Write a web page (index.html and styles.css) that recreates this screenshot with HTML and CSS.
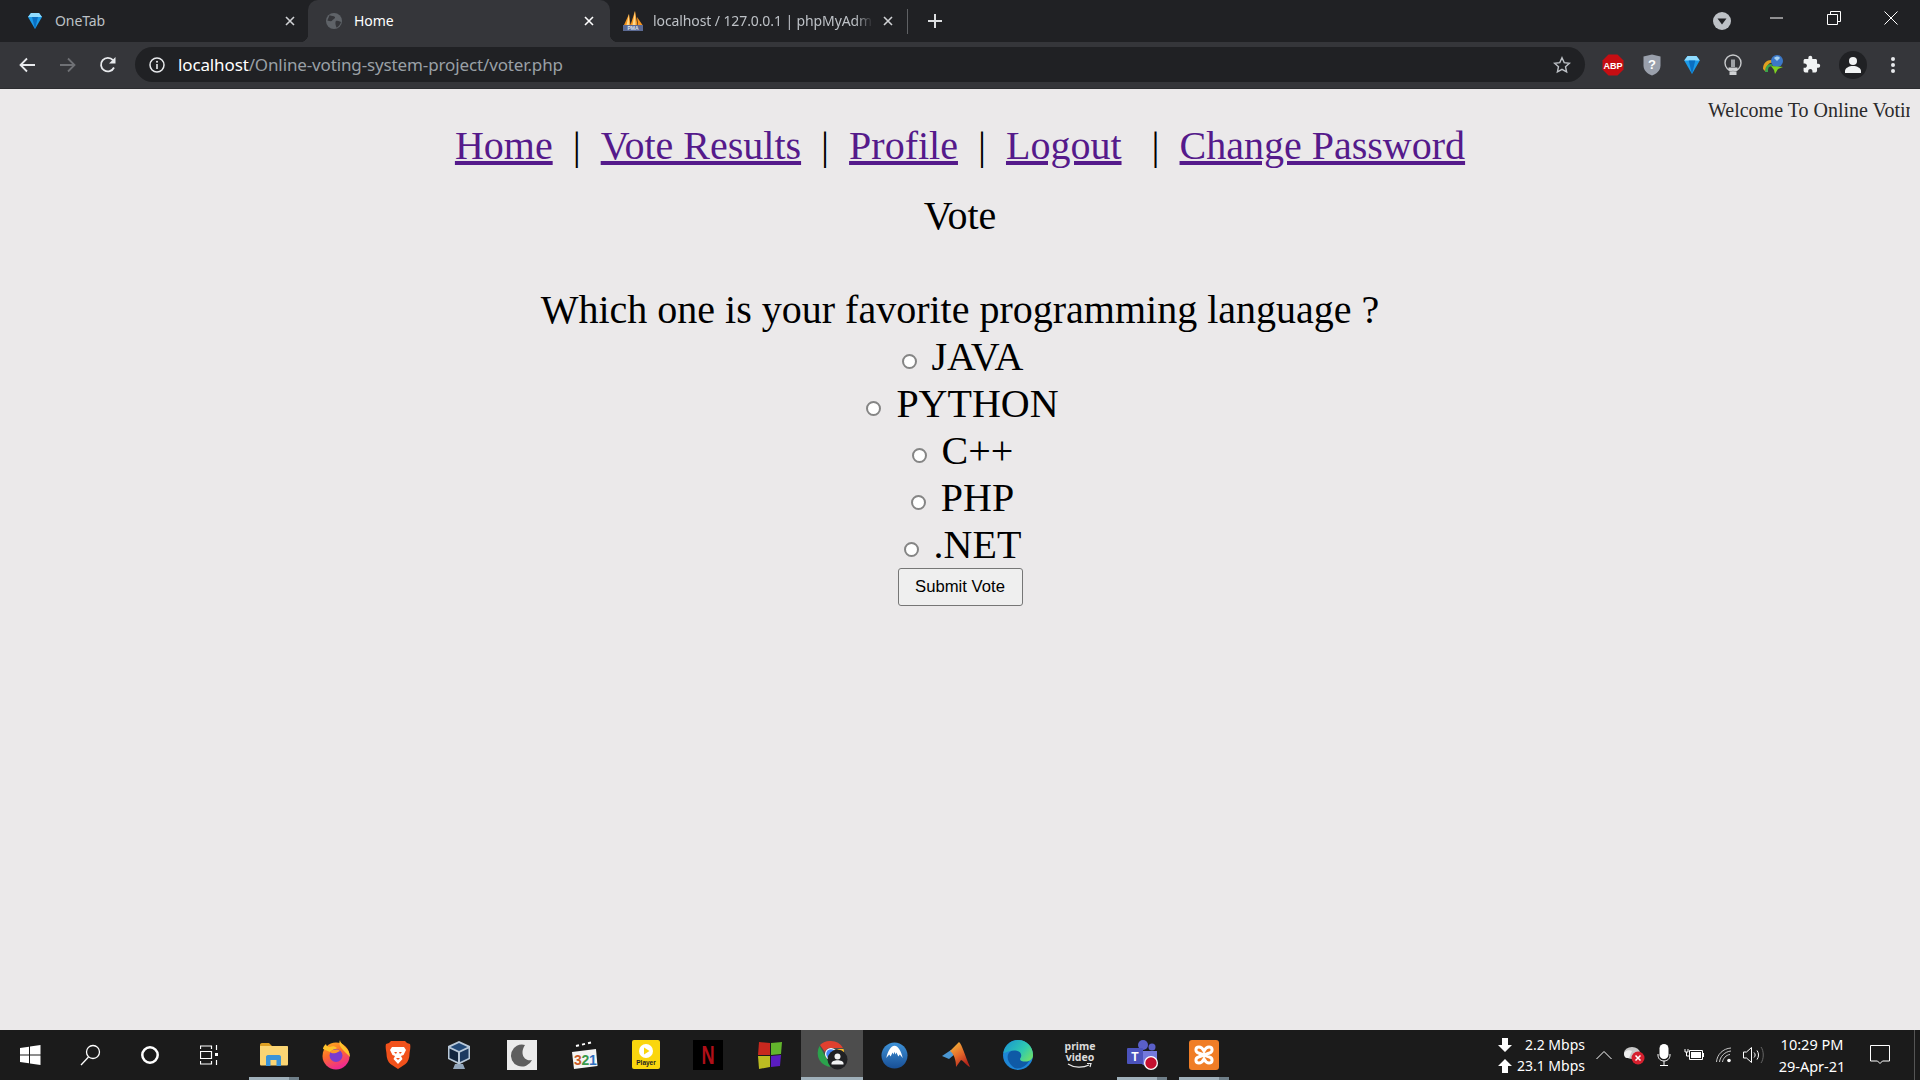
FILE: index.html
```html
<!DOCTYPE html>
<html lang="en">
<head>
<meta charset="utf-8">
<title>Home</title>
<link rel="stylesheet" href="styles.css">
</head>
<body>
<div class="tabstrip">
  <div class="tab">
    <svg class="favicon" viewBox="0 0 16 18"><polygon points="1,5 4,1 12,1 15,5 8,17" fill="#1c9be8"/><polygon points="4,1 12,1 15,5 1,5" fill="#8fdcff"/><polygon points="5,5 11,5 8,17" fill="#0a6fc2"/></svg>
    <span class="tab-title">OneTab</span>
    <svg class="tab-close" viewBox="0 0 12 12"><path d="M2 2l8 8M10 2l-8 8" stroke="#d0d2d5" stroke-width="1.6"/></svg>
  </div>
  <div class="tab tab-active">
    <svg class="favicon" viewBox="0 0 18 18"><circle cx="9" cy="9" r="9" fill="#5f6368"/><path d="M4 2.500c2 1 5 .5 6 2s-2 2.500-3 4-3 .5-5.500 0M11 9c2-1 4 0 6 1-1 3-3 5-5 6.500-1-2-2-5-1-7.500z" fill="#35363a"/></svg>
    <span class="tab-title tab-title-active">Home</span>
    <svg class="tab-close" viewBox="0 0 12 12"><path d="M2 2l8 8M10 2l-8 8" stroke="#fff" stroke-width="1.6"/></svg>
  </div>
  <div class="tab">
    <svg class="favicon favicon-wide" viewBox="0 0 20 20"><path d="M1 14L6 3l1.500 11zM7.500 14L12 0l2.500 14zM14 6l5.500 8H15z" fill="#f7941d"/><path d="M9.500 14L12 0l.6 14zM3.500 14L6 3l.3 11z" fill="#ffd98a"/><rect x="0" y="14" width="20" height="6" fill="#5b6a94"/><text x="10" y="19" text-anchor="middle" class="svg-pma">PMA</text></svg>
    <span class="tab-title tab-title-fade">localhost / 127.0.0.1 | phpMyAdmin</span>
    <svg class="tab-close" viewBox="0 0 12 12"><path d="M2 2l8 8M10 2l-8 8" stroke="#d0d2d5" stroke-width="1.6"/></svg>
  </div>
  <div class="tab-divider"></div>
  <svg class="new-tab" viewBox="0 0 16 16"><path d="M8 1v14M1 8h14" stroke="#dcdee0" stroke-width="2"/></svg>
  <div class="window-controls">
    <div class="wc wc-drop"><svg width="18" height="18" viewBox="0 0 18 18"><circle cx="9" cy="9" r="9" fill="#bdc1c6"/><path d="M4.500 6.500h9L9 12.500z" fill="#202124"/></svg></div>
    <div class="wc wc-min"><svg width="14" height="10" viewBox="0 0 14 10"><path d="M0 5h13" stroke="#fff"/></svg></div>
    <div class="wc wc-max"><svg width="14" height="14" viewBox="0 0 14 14"><path d="M.5 3.500h10v10H.5zM3.500 3V.5h10v10H11" fill="none" stroke="#fff"/></svg></div>
    <div class="wc wc-close"><svg width="14" height="14" viewBox="0 0 14 14"><path d="M.5.500l13 13M13.500.5l-13 13" stroke="#fff"/></svg></div>
  </div>
</div>

<div class="toolbar">
  <div class="nav-btn"><svg width="16" height="16" viewBox="0 0 16 16"><path d="M16 8H2M8 1.500L1.500 8 8 14.500" fill="none" stroke="#e8eaed" stroke-width="1.800"/></svg></div>
  <div class="nav-btn"><svg width="16" height="16" viewBox="0 0 16 16"><path d="M0 8h14M8 1.500L14.500 8 8 14.500" fill="none" stroke="#6f7175" stroke-width="1.800"/></svg></div>
  <div class="nav-btn"><svg width="18" height="18" viewBox="0 0 18 18"><path d="M15 11.500A6.800 6.800 0 1 1 14 4.200" fill="none" stroke="#e8eaed" stroke-width="1.800"/><path d="M16.500 1v6.500H10z" fill="#e8eaed"/></svg></div>
  <div class="omnibox">
    <svg width="16" height="16" viewBox="0 0 16 16"><circle cx="8" cy="8" r="7" fill="none" stroke="#e8eaed" stroke-width="1.500"/><path d="M8 7v5" stroke="#e8eaed" stroke-width="1.600"/><circle cx="8" cy="4.700" r="1" fill="#e8eaed"/></svg>
    <div class="url"><span class="url-host">localhost</span><span class="url-path">/Online-voting-system-project/voter.php</span></div>
    <svg class="star" width="18" height="18" viewBox="0 0 18 18"><path d="M9 1.800l2.200 4.800 5.200.6-3.900 3.500 1.100 5.200L9 13.300l-4.600 2.600 1.100-5.200L1.600 7.200l5.200-.6z" fill="none" stroke="#bdc1c6" stroke-width="1.400"/></svg>
  </div>
  <div class="ext"><svg width="22" height="22" viewBox="0 0 22 22"><polygon points="6.500,0.500 15.500,0.500 21.500,6.500 21.500,15.500 15.500,21.500 6.500,21.500 0.500,15.500 0.500,6.500" fill="#c70d12"/><text x="11" y="14.500" text-anchor="middle" class="svg-abp">ABP</text></svg></div>
  <div class="ext ext-shift"><svg width="20" height="22" viewBox="0 0 20 22"><path d="M10 .5l8.500 2v9c0 5-4 8.500-8.500 10-4.500-1.500-8.500-5-8.500-10v-9z" fill="#9aa0ac"/><text x="10" y="15" text-anchor="middle" class="svg-q">?</text></svg></div>
  <div class="ext ext-shift"><svg width="18" height="20" viewBox="0 0 16 18"><polygon points="1,5 4,1 12,1 15,5 8,17" fill="#1c9be8"/><polygon points="4,1 12,1 15,5 1,5" fill="#8fdcff"/><polygon points="5,5 11,5 8,17" fill="#0a6fc2"/></svg></div>
  <div class="ext"><svg width="18" height="22" viewBox="0 0 18 22"><circle cx="9" cy="9" r="8" fill="none" stroke="#c8cacc" stroke-width="1.400"/><path d="M7 5.500h4V13H7z" fill="#9fa2a6"/><path d="M4.500 13.500h9v3h-9zM5.500 17.500h7v3.500h-7z" fill="#d0d2d4"/></svg></div>
  <div class="ext"><svg width="22" height="22" viewBox="0 0 22 22"><path d="M1 15c0-6 4-9 8-9 2 0 3 1 4 2l-5 1c-2 1-3 3-3 6l-1 3z" fill="#e0a020"/><path d="M3 18c0-5 2-8 6-8l3 1-5 2c-1 1-1 3-1 5z" fill="#3aa34a"/><circle cx="15" cy="7" r="6" fill="#3c78c8"/><path d="M12 4c2-2 5-2 6 0l-3 3z" fill="#a6d1f0"/><path d="M9 12l12 1-5 2-3 5-1-4z" fill="#7ed321"/></svg></div>
  <div class="ext ext-shift"><svg width="19" height="19" viewBox="0 0 24 24"><path d="M20.500 11H19V7c0-1.100-.9-2-2-2h-4V3.500a2.500 2.500 0 0 0-5 0V5H4c-1.100 0-2 .9-2 2v3.800h1.500c1.500 0 2.700 1.200 2.700 2.700S5 16.200 3.500 16.200H2V20c0 1.100.9 2 2 2h3.800v-1.500c0-1.500 1.200-2.700 2.700-2.700s2.700 1.200 2.700 2.700V22H17c1.100 0 2-.9 2-2v-4h1.500a2.500 2.500 0 0 0 0-5z" fill="#f1f3f4"/></svg></div>
  <div class="ext"><div class="avatar"><svg width="18" height="18" viewBox="0 0 18 18"><circle cx="9" cy="5" r="4" fill="#f1f3f4"/><path d="M1 17v-2c0-3 4-5 8-5s8 2 8 5v2z" fill="#f1f3f4"/></svg></div></div>
  <div class="ext"><svg width="6" height="18" viewBox="0 0 6 18"><circle cx="3" cy="3" r="2" fill="#e8eaed"/><circle cx="3" cy="9" r="2" fill="#e8eaed"/><circle cx="3" cy="15" r="2" fill="#e8eaed"/></svg></div>
</div>

<main class="page">
  <div class="marquee"><span class="marquee-text">Welcome To Online Voting System</span></div>
  <nav class="links">
    <a href="#">Home</a>&nbsp;&nbsp;|&nbsp;&nbsp;<a href="#">Vote Results</a>&nbsp;&nbsp;|&nbsp;&nbsp;<a href="#">Profile</a>&nbsp;&nbsp;|&nbsp;&nbsp;<a href="#">Logout</a>&nbsp;&nbsp;&nbsp;|&nbsp;&nbsp;<a href="#">Change Password</a>
  </nav>
  <div class="vote-title">Vote</div>
  <form class="vote-form">
    <div class="question">Which one is your favorite programming language ?</div>
    <div class="option"><input type="radio" name="lang" class="radio"> JAVA</div>
    <div class="option"><input type="radio" name="lang" class="radio"> PYTHON</div>
    <div class="option"><input type="radio" name="lang" class="radio"> C++</div>
    <div class="option"><input type="radio" name="lang" class="radio"> PHP</div>
    <div class="option"><input type="radio" name="lang" class="radio"> .NET</div>
    <button type="button" class="submit">Submit Vote</button>
  </form>
</main>

<footer class="taskbar">
  <div class="sys-cell"><svg width="24" height="24" viewBox="0 0 24 24"><path d="M2 5l9-1.300V11.500H2zM12 3.500L22.500 2v9.500H12zM2 12.500h9v7.800L2 19zM12 12.500h10.500V22L12 20.500z" fill="#fff"/></svg></div>
  <div class="sys-cell"><svg width="22" height="24" viewBox="0 0 22 24"><circle cx="14" cy="9" r="6.500" fill="none" stroke="#fff" stroke-width="1.300"/><path d="M9.500 14L2 22" stroke="#fff" stroke-width="1.300"/></svg></div>
  <div class="sys-cell"><svg width="20" height="20" viewBox="0 0 20 20"><circle cx="10" cy="10" r="7.700" fill="none" stroke="#fff" stroke-width="2.500"/></svg></div>
  <div class="sys-cell"><svg width="20" height="22" viewBox="0 0 20 22"><path d="M.5 5V2h11v3M.5 17v3h11v-3M.5 7.500h11v7H.5zM16.500 1v5M16.500 16v5" fill="none" stroke="#fff" stroke-width="1.200"/><rect x="15" y="9" width="3" height="3" fill="#fff"/></svg></div>

  <div class="pin pin-first pin-open">
    <svg width="30" height="30" viewBox="0 0 30 30"><path d="M1 5c0-1 .5-2 2-2h7l3 3h-12z" fill="#dd9f22"/><path d="M1 6h27c.6 0 1 .4 1 1v17c0 1-.6 1.500-1.500 1.500h-25C1.600 25.500 1 25 1 24z" fill="#fbd573"/><path d="M7 26v-9c0-1 .6-2 2-2h11c1.400 0 2 1 2 2v9h-4.500v-6h-6v6z" fill="#3a94d8"/></svg>
  </div>
  <div class="pin">
    <svg width="30" height="30" viewBox="0 0 30 30"><defs><linearGradient id="ff" x1="0" y1="0" x2="0.400" y2="1"><stop offset="0" stop-color="#ffb51e"/><stop offset=".5" stop-color="#ff6b2c"/><stop offset="1" stop-color="#f02b8e"/></linearGradient></defs><circle cx="15" cy="16" r="13.500" fill="url(#ff)"/><path d="M19 0c0 5 10 7 10 17-2-2-5-5-7-7-2-3-5-5-3-10zM2 9c0-2 1-3 3-5 0 2 2 3 4 3 2-1 5-1 7 1l-7 4z" fill="#ffc42b"/><circle cx="15" cy="15.500" r="6.500" fill="#7a3bd0"/><path d="M9 12c3-3 8-3 10-1l-4 2c-2 0-4 1-6-1z" fill="#ff9a2a"/></svg>
  </div>
  <div class="pin">
    <svg width="30" height="30" viewBox="0 0 30 30"><path d="M8 1h14l2 2 3 1c1 3-.5 8-.5 10 0 4-1.500 8-4 10L15 29l-7.500-5C5 22 3.500 18 3.500 14c0-2-1.500-7-.5-10l3-1z" fill="#f1511b"/><path d="M9 7h12l2 3-2.500 5-2.500 1 1.500 3-4.500 5-4.500-5 1.500-3-2.500-1L7 10z" fill="#fff"/><path d="M11 12h3l-1 2zM19 12h-3l1 2zM13 18h4l-2 2z" fill="#f1511b"/></svg>
  </div>
  <div class="pin pin-nudge">
    <svg width="30" height="30" viewBox="0 0 30 30"><path d="M15 1l11 5v13l-11 5.500L4 19V6z" fill="#b8c8d8"/><path d="M15 3l8.500 4L15 11 6.500 7z" fill="#234a78"/><path d="M5.500 8.500l8.500 4V22l-8.500-4z" fill="#12263f"/><path d="M16 12.500l8.500-4V18L16 22z" fill="#1d3a60"/><path d="M11 24h8l2 5h-12z" fill="#93a6bb"/></svg>
  </div>
  <div class="pin">
    <svg width="30" height="30" viewBox="0 0 30 30"><rect width="30" height="30" fill="#ebebeb"/><path d="M18 5a11 11 0 1 0 7 15c-7 2-13-6-7-15z" fill="#5e5e5e"/></svg>
  </div>
  <div class="pin">
    <svg width="30" height="30" viewBox="0 0 30 30"><path d="M2 8L26 2l1.500 5L3 12z" fill="#1a1a1a"/><path d="M7 6l3-.7M13 4.600l3-.7M19 3.200l3-.7" stroke="#fff" stroke-width="2"/><path d="M3 12l24-3 1.500 17L5 29z" fill="#f4f4f4"/><text x="5" y="25" class="svg-mpc svg-mpc-a">3</text><text x="12.500" y="25" class="svg-mpc svg-mpc-b">2</text><text x="20" y="25" class="svg-mpc svg-mpc-c">1</text></svg>
  </div>
  <div class="pin">
    <svg width="30" height="30" viewBox="0 0 30 30"><rect x="1" y="0" width="28" height="29" rx="2" fill="#fad60e"/><circle cx="15" cy="11" r="7" fill="#fff"/><path d="M13 7.500l5.500 3.500-5.500 3.500z" fill="#fad60e"/><text x="15" y="25" text-anchor="middle" class="svg-player">Player</text></svg>
  </div>
  <div class="pin">
    <svg width="30" height="30" viewBox="0 0 30 30"><rect width="30" height="30" fill="#000"/><text x="21.400" y="24" text-anchor="middle" transform="scale(.7 1)" class="svg-netflix">N</text></svg>
  </div>
  <div class="pin">
    <svg width="30" height="30" viewBox="0 0 30 30"><path d="M4 2l11 1v12H3z" fill="#c8281e"/><path d="M16 3l11-1-1 12-10 1z" fill="#62b52c"/><path d="M3 16l12 0v11l-11 2z" fill="#bcbc22"/><path d="M16 16l10-1-1 11-9 1z" fill="#5a1cc0"/></svg>
  </div>
  <div class="pin pin-open pin-active">
    <svg width="32" height="32" viewBox="0 0 32 32"><path d="M15 2a14 14 0 0 1 12 7H15a6 6 0 0 0-6 4L4 6a14 14 0 0 1 11-4z" fill="#e0402f"/><path d="M3.500 7l6 10.500 6 10.500A14 14 0 0 1 3.500 7z" fill="#2ba24c"/><path d="M27.500 10a14 14 0 0 1-11 18l6-10a6 6 0 0 0-1.500-8z" fill="#fbc02d"/><circle cx="15" cy="15" r="6" fill="#fff"/><circle cx="15" cy="15" r="4.800" fill="#4285f4"/><circle cx="21.500" cy="20.500" r="10" fill="#202124"/><circle cx="21.500" cy="17.500" r="3" fill="#f1f3f4"/><path d="M15.500 25.500v-1c0-2 3-3.200 6-3.200s6 1.200 6 3.200v1z" fill="#f1f3f4"/></svg>
  </div>
  <div class="pin">
    <svg width="27" height="27" viewBox="0 0 28 28"><defs><linearGradient id="nord" x1="0" y1="0" x2="0" y2="1"><stop offset="0" stop-color="#3f93d8"/><stop offset="1" stop-color="#184f96"/></linearGradient></defs><circle cx="14" cy="14" r="13.500" fill="url(#nord)"/><path d="M5.500 16.500C7 10 10 4 14 4s7 6 8.500 12.500l-3-3.500-1.500 2-2-4-1 2-1-3-1 3-1-2-2 4-1.500-2z" fill="#fff"/></svg>
  </div>
  <div class="pin">
    <svg width="30" height="30" viewBox="0 0 30 30"><defs><linearGradient id="mat" x1="0" y1="0" x2="0.600" y2="1"><stop offset="0" stop-color="#f7c23c"/><stop offset=".6" stop-color="#e2662a"/><stop offset="1" stop-color="#b5261c"/></linearGradient></defs><path d="M1 16l9-6 4 4-6 5z" fill="#4b97d2"/><path d="M9 11l9-9c3 2 6 14 11 25-4-2-6-6-9-7l-5 7c0-7-2-13-6-16z" fill="url(#mat)"/></svg>
  </div>
  <div class="pin">
    <svg width="30" height="30" viewBox="0 0 30 30"><defs><linearGradient id="edge1" x1="0" y1="0.200" x2="1" y2="0.800"><stop offset="0" stop-color="#1b9ad0"/><stop offset=".6" stop-color="#2fc9b0"/><stop offset="1" stop-color="#6ee06a"/></linearGradient></defs><circle cx="15" cy="15" r="15" fill="#1e86d6"/><path d="M6 22c-3-5-1-11 5-12 6-1 10 3 7 8-1 2 1 3 5 3 2 0 3-.5 4-1.500-3 6-8 9-13 9-3 0-6-3-8-6.500z" fill="#0f5aa6"/><path d="M0.500 13C2 5 8 0 15 0c9 0 15 7 15 15 0 4-3 6.500-7.500 6.500-4 0-6.500-1.500-5-3.500 2-3 0-7-5-7.500-5-.5-9.500 2-12 2.500z" fill="url(#edge1)"/></svg>
  </div>
  <div class="pin">
    <div class="prime"><span>prime</span><span>video</span><svg class="prime-smile" width="26" height="6" viewBox="0 0 26 6"><path d="M1 1c6 4 15 4 21 1M20 .5h4l-1 3.500" fill="none" stroke="#e8e8e8" stroke-width="1.200"/></svg></div>
  </div>
  <div class="pin pin-open">
    <svg width="32" height="32" viewBox="0 0 32 32"><circle cx="17" cy="6" r="5" fill="#5a5fc8"/><circle cx="26" cy="8" r="3.500" fill="#5a5fc8"/><path d="M14 12h17v10c0 4-3 6-6 6s-8-1-11-5z" fill="#7479dc"/><rect x="1" y="9" width="16" height="16" rx="1" fill="#4b53bc"/><text x="9" y="22" text-anchor="middle" class="svg-teams">T</text><circle cx="25" cy="24" r="7" fill="#fff"/><circle cx="25" cy="24" r="5.700" fill="#c4102f"/></svg>
  </div>
  <div class="pin pin-open">
    <svg width="30" height="30" viewBox="0 0 30 30"><rect width="30" height="30" rx="3" fill="#f07d26"/><path d="M10 7C6 7 6 12 9.500 13L20.500 17C24 18 24 23 20 23 17 23 16 21 15 19 14 21 13 23 10 23 6 23 6 18 9.500 17L20.500 13C24 12 24 7 20 7 17 7 16 9 15 11 14 9 13 7 10 7z" fill="none" stroke="#fff" stroke-width="3"/></svg>
  </div>

  <div class="tray">
    <div class="netspeed">
      <div class="net-row"><svg width="16" height="16" viewBox="0 0 16 16"><path d="M5 1h6v7h4l-7 7-7-7h4z" fill="#fff"/></svg><span>2.2 Mbps</span></div>
      <div class="net-row"><svg width="16" height="16" viewBox="0 0 16 16"><path d="M5 15h6V8h4L8 1 1 8h4z" fill="#fff"/></svg><span>23.1 Mbps</span></div>
    </div>
    <div class="tray-cell"><svg width="16" height="10" viewBox="0 0 16 10"><path d="M.5 9L8 1.500 15.500 9" fill="none" stroke="#fff" stroke-width="1"/></svg></div>
    <div class="tray-cell"><svg width="22" height="20" viewBox="0 0 22 20"><ellipse cx="9" cy="8" rx="8" ry="6" fill="#c8c8c8"/><path d="M1 9c0-3 5-5 8-3l-3 7H4c-2 0-3-2-3-4z" fill="#f0f0f0"/><circle cx="15" cy="13" r="6.500" fill="#d6202e"/><path d="M12.500 10.500l5 5M17.500 10.500l-5 5" stroke="#fff" stroke-width="1.500"/></svg></div>
    <div class="tray-cell"><svg width="14" height="22" viewBox="0 0 14 22"><rect x="2.500" y="0" width="9" height="15" rx="4.500" fill="#fff"/><path d="M1 10v1c0 4 3 6 6 6s6-2 6-6v-1M7 17v4M3 21.500h8" fill="none" stroke="#fff" stroke-width="1"/></svg></div>
    <div class="tray-cell"><svg width="20" height="14" viewBox="0 0 20 14"><path d="M5.500 2.500h13v9h-13z" fill="none" stroke="#fff"/><rect x="7" y="4" width="10" height="6" fill="#fff"/><rect x="18.500" y="5" width="1.500" height="4" fill="#fff"/><path d="M1 1v3h3V1M2.500 4v4h3" fill="none" stroke="#fff"/></svg></div>
    <div class="tray-cell"><svg width="16" height="16" viewBox="0 0 16 16"><path d="M.5 15C1 7.500 7 1.500 15 1M3.500 15C4 9.500 9 4.500 15 4M6.500 15C7 11.500 10 8 14 7.500" fill="none" stroke="#c8c8c8"/><circle cx="13" cy="13.500" r="1.800" fill="#fff"/></svg></div>
    <div class="tray-cell"><svg width="22" height="18" viewBox="0 0 22 18"><path d="M.5 6h3l5-4.500v15L3.500 12h-3z" fill="none" stroke="#fff"/><path d="M11 6.500c1.500 1.500 1.500 3.500 0 5M14 4.500c2 2.500 2 6.500 0 9" fill="none" stroke="#fff"/><path d="M18 1c3 4 3 12 0 16" fill="none" stroke="#666"/></svg></div>
    <div class="clock"><span>10:29 PM</span><span>29-Apr-21</span></div>
    <div class="tray-cell"><svg width="20" height="20" viewBox="0 0 20 20"><path d="M.5.500h19v15.500h-7l-2.500 2.500L7.500 16h-7z" fill="none" stroke="#fff"/></svg></div>
    <div class="show-desktop"></div>
  </div>
</footer>
</body>
</html>
```
FILE: styles.css
```css
* { box-sizing: border-box; }
html, body { height: 100%; }
body {
  margin: 0;
  display: flex;
  flex-direction: column;
  height: 1080px;
  overflow: hidden;
  background: #ebe9ea;
  font-family: "Liberation Serif", serif;
}

/* tab strip */
.tabstrip {
  flex: 0 0 42px;
  display: flex;
  align-items: center;
  padding-left: 9px;
  background: #202124;
  font-family: "Noto Sans", sans-serif;
}
.tab {
  position: relative;
  width: 299px;
  height: 42px;
  display: flex;
  align-items: center;
  padding-left: 18px;
  flex: none;
}
.tab-active::before {
  content: "";
  position: absolute;
  top: 0;
  bottom: 0;
  left: 0;
  right: -3px;
  background: #35363a;
  border-radius: 10px 10px 0 0;
}
.tab-active::after {
  content: "";
  position: absolute;
  bottom: 0;
  left: -8px;
  right: -11px;
  height: 8px;
  background:
    radial-gradient(circle at 0 0, transparent 8px, #35363a 8.5px) left bottom / 8px 8px no-repeat,
    radial-gradient(circle at 100% 0, transparent 8px, #35363a 8.5px) right bottom / 8px 8px no-repeat;
}
.favicon { position: relative; width: 16px; height: 18px; flex: none; }
.favicon-wide { width: 20px; height: 20px; margin-right: -2px; margin-left: -2px; }
.tab-title {
  position: relative;
  margin-left: 12px;
  margin-bottom: 1px;
  font-size: 14px;
  color: #bdc1c6;
  white-space: nowrap;
  letter-spacing: -0.1px;
}
.tab-title-active { color: #fff; }
.tab-title-fade {
  width: 220px;
  overflow: hidden;
  -webkit-mask-image: linear-gradient(to right, #000 92%, transparent);
  mask-image: linear-gradient(to right, #000 92%, transparent);
}
.tab-close { position: absolute; left: 275px; top: 15px; width: 12px; height: 12px; }
.tab-divider { width: 1px; height: 25px; margin-left: 1px; background: #5f6164; flex: none; }
.new-tab { width: 16px; height: 16px; margin-left: 19px; flex: none; }
.window-controls { margin-left: auto; display: flex; padding-right: 1px; height: 42px; }
.wc { display: flex; align-items: center; justify-content: center; }
.wc-drop { width: 54px; }
.wc-min { width: 56px; padding-bottom: 6px; }
.wc-max { width: 58px; padding-bottom: 6px; }
.wc-close { width: 56px; padding-bottom: 6px; }

/* toolbar */
.toolbar {
  flex: 0 0 46px;
  display: flex;
  align-items: center;
  padding: 5px 7px 6px;
  background: #35363a;
  border-bottom: 1px solid #2c2d30;
  font-family: "Noto Sans", sans-serif;
}
.nav-btn { width: 40.5px; display: flex; justify-content: center; flex: none; }
.omnibox {
  width: 1450px;
  height: 35px;
  margin-left: 6.5px;
  margin-right: 8px;
  display: flex;
  align-items: center;
  padding: 0 14px;
  gap: 13px;
  border-radius: 18px;
  background: #202124;
  flex: none;
}
.url { font-size: 17px; white-space: nowrap; flex: 1; letter-spacing: -0.13px; }
.url-host { color: #fff; }
.url-path { color: #9aa0a6; }
.star { flex: none; }
.ext { width: 40px; display: flex; justify-content: center; align-items: center; flex: none; }
.ext-shift svg { margin-right: 3px; }
.avatar {
  width: 28px;
  height: 28px;
  border-radius: 50%;
  background: #202124;
  display: flex;
  align-items: center;
  justify-content: center;
}
.svg-abp { font: bold 9px "Liberation Sans", sans-serif; fill: #fff; }
.svg-q { font: bold 13px "Liberation Sans", sans-serif; fill: #fff; }
.svg-pma { font: bold 5px "Liberation Sans", sans-serif; fill: #dfe3ee; }

/* page */
.page { flex: 1; min-height: 0; padding: 10px 8px 8px; color: #000; }
.marquee { height: 23px; overflow: hidden; font-size: 20px; line-height: 23px; white-space: nowrap; padding-left: 1700px; color: #2a2a2a; width: 1902px; }
.links { margin-top: 1px; text-align: center; font-size: 40px; line-height: 46px; }
.links a { color: #551a8b; }
.vote-title { margin-top: 24px; text-align: center; font-size: 40px; line-height: 46px; }
.vote-form { margin-top: 48px; display: flex; flex-direction: column; align-items: center; font-size: 40px; }
.question { line-height: 46px; }
.option { line-height: 47px; white-space: pre; }
.radio {
  appearance: none;
  -webkit-appearance: none;
  width: 15px;
  height: 15px;
  margin: 3px 5px 1px 5px;
  background: #fff;
  border: 2px solid #858585;
  border-radius: 50%;
}
.submit {
  width: 125px;
  height: 38px;
  padding: 0;
  font: 16.67px "Liberation Sans", sans-serif;
  color: #000;
  background: #efefef;
  border: 1px solid #767676;
  border-radius: 3px;
}

/* taskbar */
.taskbar {
  flex: 0 0 50px;
  display: flex;
  align-items: stretch;
  background: #1b1b1b;
  font-family: "Noto Sans", sans-serif;
  color: #fff;
}
.sys-cell { width: 60px; display: flex; align-items: center; justify-content: center; flex: none; }
.pin {
  position: relative;
  width: 62px;
  display: flex;
  align-items: center;
  justify-content: center;
  flex: none;
}
.pin-first { margin-left: 3px; }
.pin-nudge svg { margin-right: 3px; }
.pin-open::after {
  content: "";
  position: absolute;
  left: 6px;
  right: 6px;
  bottom: 0;
  height: 3px;
  background: linear-gradient(to right, #9fb0ba 80%, #6f7f89 80%);
}
.pin-active { background: #4d4d4d; }
.pin-active::after { left: 0; right: 0; background: #9fb0ba; }
.prime { display: flex; flex-direction: column; align-items: center; font-size: 10.500px; font-weight: 700; line-height: 11px; color: #dcdcdc; }
.prime-smile { margin-top: 0; }
.svg-mpc { font: bold 14px "Liberation Sans", sans-serif; }
.svg-mpc-a { fill: #c95a26; }
.svg-mpc-b { fill: #3a9a4a; }
.svg-mpc-c { fill: #2d6fc0; }
.svg-player { font: bold 6.500px "Liberation Sans", sans-serif; fill: #222; }
.svg-netflix { font: bold 26px "Liberation Sans", sans-serif; fill: #b00f18; }
.svg-teams { font: bold 12px "Liberation Sans", sans-serif; fill: #fff; }
.tray { margin-left: auto; display: flex; align-items: stretch; }
.netspeed { width: 92px; padding-right: 4px; display: flex; flex-direction: column; justify-content: center; font-size: 14px; flex: none; }
.net-row { height: 21px; display: flex; align-items: center; justify-content: space-between; }
.tray-cell { width: 30px; display: flex; align-items: center; justify-content: center; flex: none; }
.clock { width: 96px; padding-right: 10px; display: flex; flex-direction: column; align-items: center; justify-content: center; font-size: 14.500px; line-height: 22px; flex: none; }
.show-desktop { width: 1px; margin-left: 19px; margin-right: 5px; background: #555; }
```
